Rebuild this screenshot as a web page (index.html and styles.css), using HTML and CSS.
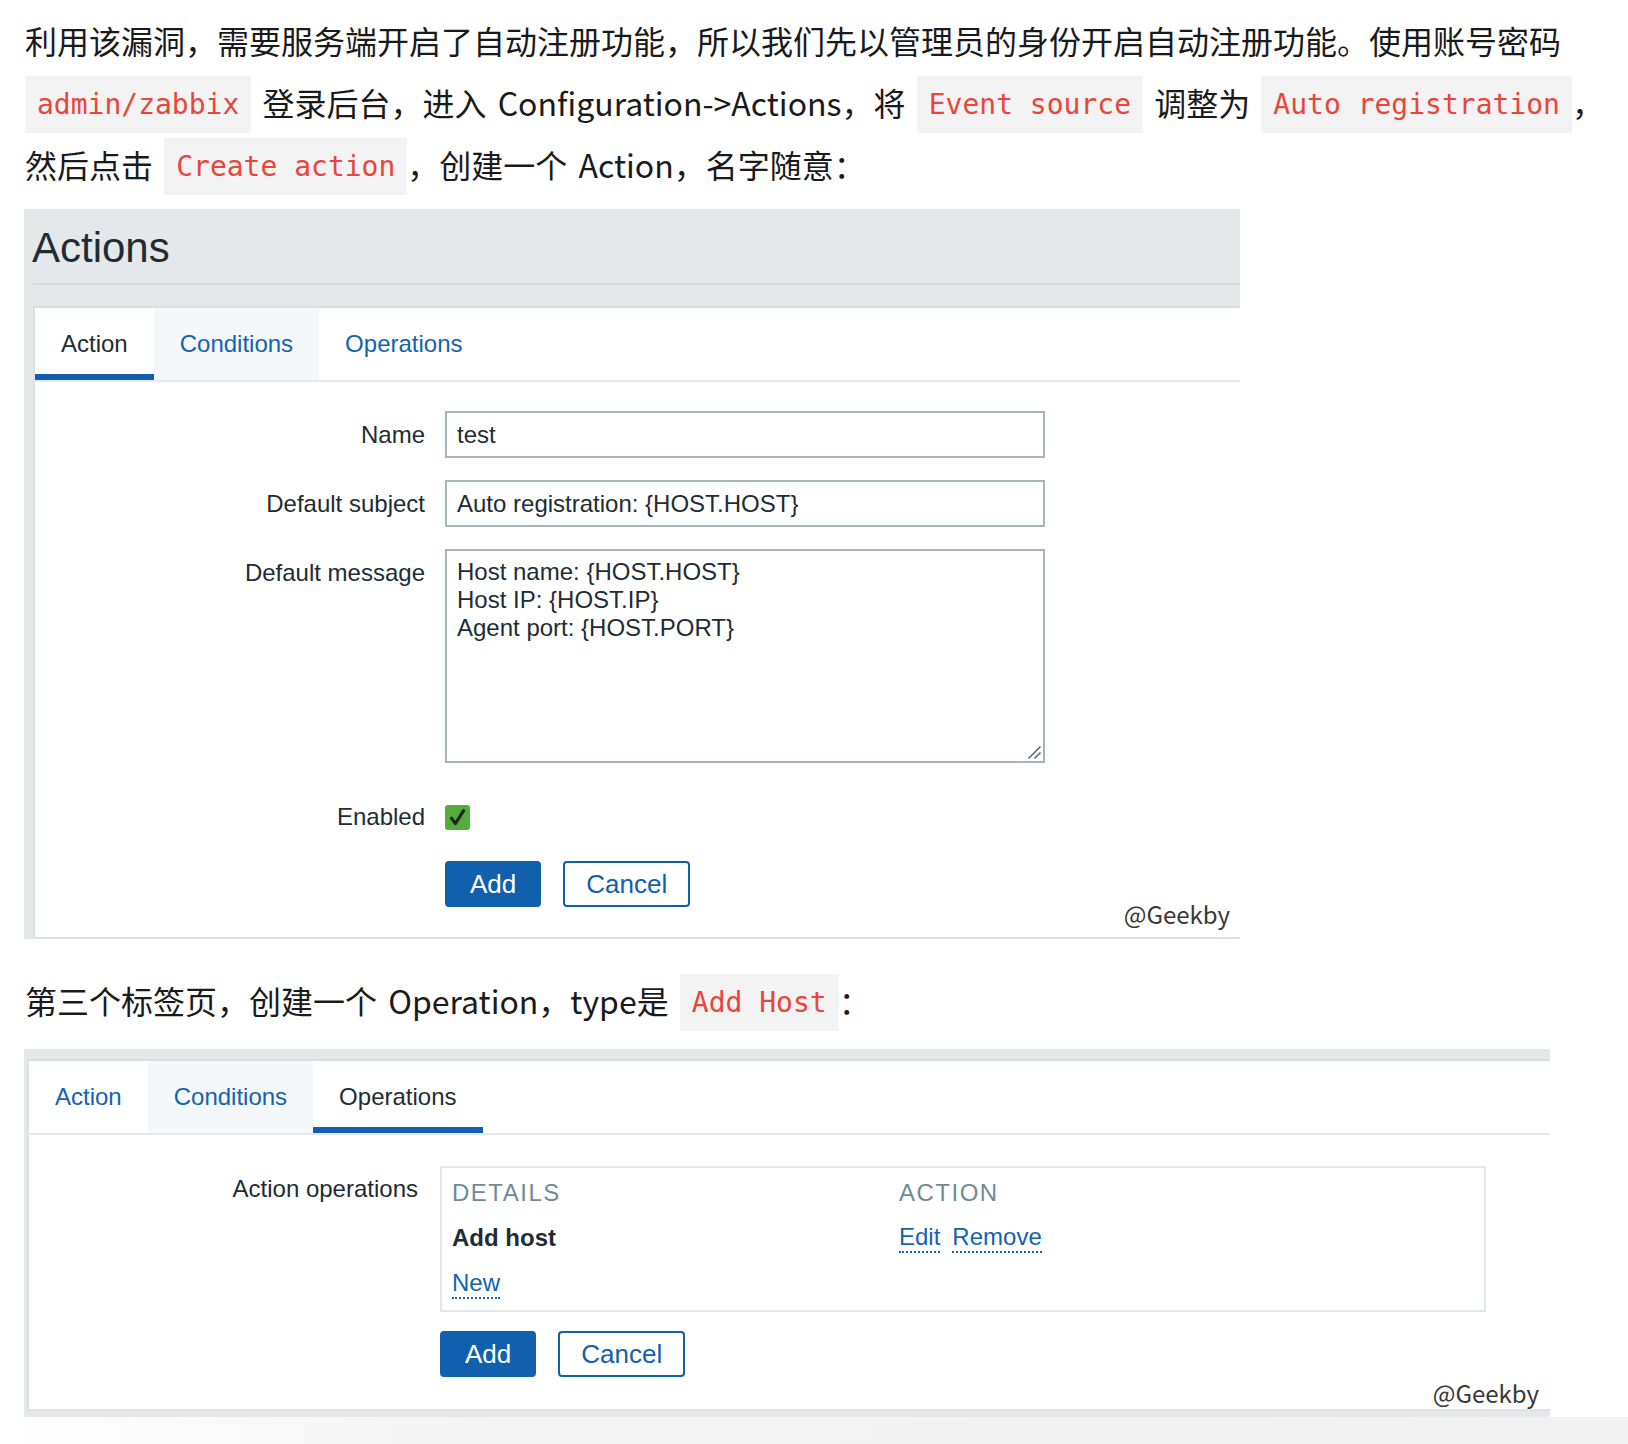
FILE: index.html
```html
<!DOCTYPE html>
<html lang="zh-CN">
<head>
<meta charset="utf-8">
<title>Zabbix auto registration</title>
<link rel="stylesheet" href="styles.css">
</head>
<body>
<main class="article">
  <p class="text text-first">利用该漏洞，需要服务端开启了自动注册功能，所以我们先以管理员的身份开启自动注册功能。使用账号密码<br><code>admin/zabbix</code> 登录后台，进入 Configuration-&gt;Actions，将 <code>Event source</code> 调整为 <code>Auto registration</code>，<br>然后点击 <code>Create action</code>，创建一个 Action，名字随意：</p>

  <section class="panel panel-one">
    <header class="panel-head"><h1 class="panel-title">Actions</h1></header>
    <div class="panel-body">
      <ul class="tabs">
        <li class="tab tab-active">Action</li>
        <li class="tab tab-hover">Conditions</li>
        <li class="tab">Operations</li>
      </ul>
      <form class="form form-one">
        <div class="frow">
          <label class="flabel">Name</label>
          <input class="finput" type="text" value="test">
        </div>
        <div class="frow frow-gap">
          <label class="flabel">Default subject</label>
          <input class="finput" type="text" value="Auto registration: {HOST.HOST}">
        </div>
        <div class="frow frow-gap">
          <label class="flabel">Default message</label>
          <span class="area-wrap">
            <textarea class="farea">Host name: {HOST.HOST}
Host IP: {HOST.IP}
Agent port: {HOST.PORT}</textarea>
            <svg class="grip" width="16" height="16" viewBox="0 0 16 16"><path d="M14.5 2.5 L2.5 14.5 M14.5 8.5 L8.5 14.5" stroke="#5a6a73" stroke-width="1.6" fill="none"/></svg>
          </span>
        </div>
        <div class="frow frow-check">
          <label class="flabel">Enabled</label>
          <span class="check"><svg width="25" height="25" viewBox="0 0 25 25"><rect x="0" y="0" width="25" height="25" rx="3" fill="#52ad3d"/><path d="M6.5 13.2 L10.4 18.6 L18.6 5.6" fill="none" stroke="#1d2a1b" stroke-width="3.2" stroke-linecap="round" stroke-linejoin="round"/></svg></span>
        </div>
        <div class="frow frow-buttons">
          <span class="flabel"></span>
          <div class="buttons">
            <button type="button" class="btn btn-main">Add</button>
            <button type="button" class="btn btn-alt">Cancel</button>
          </div>
        </div>
      </form>
      <span class="watermark">@Geekby</span>
    </div>
  </section>

  <p class="text text-second">第三个标签页，创建一个 Operation，type是 <code>Add Host</code>：</p>

  <section class="panel panel-two">
    <div class="panel-body">
      <ul class="tabs">
        <li class="tab">Action</li>
        <li class="tab tab-hover">Conditions</li>
        <li class="tab tab-active">Operations</li>
      </ul>
      <div class="form form-two">
        <div class="frow">
          <span class="flabel flabel-ops">Action operations</span>
          <div class="ops">
            <div class="ops-row ops-head"><span class="ops-c1">DETAILS</span><span>ACTION</span></div>
            <div class="ops-row"><span class="ops-c1 ops-strong">Add host</span><span class="ops-links"><a class="dlink">Edit</a><a class="dlink">Remove</a></span></div>
            <div class="ops-row"><span class="ops-c1"><a class="dlink">New</a></span></div>
          </div>
        </div>
        <div class="frow frow-buttons2">
          <span class="flabel flabel-ops"></span>
          <div class="buttons">
            <button type="button" class="btn btn-main">Add</button>
            <button type="button" class="btn btn-alt">Cancel</button>
          </div>
        </div>
      </div>
      <span class="watermark watermark-two">@Geekby</span>
    </div>
  </section>
  <div class="page-shade"></div>
</main>
</body>
</html>
```

FILE: styles.css
```css
html, body {
  margin: 0;
  padding: 0;
  background: #ffffff;
}

body {
  font-family: "Noto Sans CJK SC", "Noto Sans", sans-serif;
  color: #1a1a1a;
}

.article {
  padding-top: 9px;
}

.text {
  margin: 0 0 0 25px;
  font-size: 32px;
  line-height: 62px;
  white-space: nowrap;
  word-spacing: 4px;
}

.text code {
  font-family: "DejaVu Sans Mono", "Liberation Mono", monospace;
  font-size: 28px;
  line-height: 1;
  vertical-align: 2px;
  word-spacing: 0;
  color: #e8463a;
  background: #f3f3f3;
  padding: 12px 12px;
}

.text-second {
  margin-top: 30px;
}

/* ---------- Zabbix panels ---------- */
.panel {
  margin-left: 24px;
  background: #e4e8eb;
  font-family: "Liberation Sans", Arial, sans-serif;
  color: #1f2c33;
}

.panel-one {
  width: 1216px;
  margin-top: 14px;
  padding-left: 9px;
  box-sizing: border-box;
}

.panel-two {
  width: 1526px;
  margin-top: 18px;
  padding: 10px 0 6px 3px;
  box-sizing: border-box;
}

.panel-head {
  border-bottom: 2px solid #d5dadd;
  margin-bottom: 21px;
}

.panel-title {
  margin: 0 0 0 -1px;
  padding-top: 4px;
  font-size: 42px;
  line-height: 70px;
  font-weight: normal;
  color: #1f2c33;
}

.panel-body {
  position: relative;
  background: #ffffff;
  border-top: 2px solid #d9dee1;
  border-left: 2px solid #dde2e5;
  border-bottom: 2px solid #dde2e5;
}

.tabs {
  display: flex;
  margin: 0;
  padding: 0;
  list-style: none;
  border-bottom: 2px solid #e6e9eb;
}

.tab {
  height: 72px;
  line-height: 72px;
  padding: 0 26px;
  font-size: 24px;
  color: #1562b0;
}

.tab-hover {
  background: #f4f8fb;
}

.tab-active {
  color: #1f2c33;
  box-shadow: inset 0 -6px 0 #1060ae;
}

/* ---------- forms ---------- */
.form-one {
  padding: 29px 0 30px;
}

.form-two {
  padding: 31px 0 32px;
}

.frow {
  display: flex;
  align-items: flex-start;
}

.frow-gap {
  margin-top: 22px;
}

.frow-check {
  margin-top: 31px;
  align-items: center;
  height: 46px;
}

.frow-buttons {
  margin-top: 21px;
}

.frow-buttons2 {
  margin-top: 19px;
}

.flabel {
  flex: none;
  width: 390px;
  margin-right: 20px;
  text-align: right;
  font-size: 24px;
  line-height: 47px;
  color: #1f2c33;
}

.frow-check .flabel {
  line-height: 46px;
}

.flabel-ops {
  width: 389px;
  margin-right: 22px;
  line-height: 46px;
}

.finput,
.farea {
  width: 600px;
  box-sizing: border-box;
  border: 2px solid #a7b5bd;
  background: #ffffff;
  font-family: "Liberation Sans", Arial, sans-serif;
  font-size: 24px;
  color: #1f2c33;
  margin: 0;
  outline: none;
}

.finput {
  height: 47px;
  padding: 0 10px;
}

.area-wrap {
  position: relative;
  display: block;
}

.farea {
  height: 214px;
  padding: 7px 10px;
  line-height: 28px;
  resize: none;
  display: block;
}

.grip {
  position: absolute;
  right: 3px;
  bottom: 3px;
}

.check {
  display: block;
  width: 25px;
  height: 25px;
}

.check svg {
  display: block;
}

.buttons {
  display: flex;
  gap: 22px;
}

.btn {
  box-sizing: border-box;
  height: 46px;
  margin: 0;
  padding: 0 22px;
  border: 2px solid #1060ae;
  border-radius: 4px;
  font-family: "Liberation Sans", Arial, sans-serif;
  font-size: 26px;
  line-height: 42px;
}

.btn-main {
  background: #1060ae;
  color: #ffffff;
  padding: 0 23px;
}

.btn-alt {
  background: #ffffff;
  color: #1060ae;
  padding: 0 21px;
}

/* ---------- operations list ---------- */
.ops {
  width: 1046px;
  box-sizing: border-box;
  border: 2px solid #e5e8ea;
  padding: 3px 10px 5px;
}

.ops-row {
  display: flex;
  height: 44px;
  line-height: 44px;
  font-size: 24px;
}

.ops-row + .ops-row {
  padding-top: 1px;
}

.ops-c1 {
  width: 447px;
  flex: none;
}

.ops-head {
  color: #718a97;
  letter-spacing: 1.5px;
}

.ops-strong {
  font-weight: bold;
  color: #1f2c33;
}

.ops-links {
  display: flex;
  gap: 12px;
}

.dlink {
  color: #1562b0;
  border-bottom: 2px dotted #1562b0;
  line-height: 1.15;
  align-self: center;
}

.ops-c1 .dlink {
  display: inline-block;
}

/* ---------- watermark ---------- */
.watermark {
  position: absolute;
  right: 10px;
  bottom: 11px;
  font-family: "Noto Sans CJK SC", "Noto Sans", sans-serif;
  font-size: 24px;
  line-height: 24px;
  color: #383838;
  text-shadow: 0 0 2px #ffffff, 0 0 2px #ffffff;
}

.watermark-two {
  right: 11px;
  bottom: 4px;
}

.page-shade {
  height: 28px;
  background: linear-gradient(to right, #ffffff 0%, #f3f3f3 30%, #f1f1f1 100%);
}
```
